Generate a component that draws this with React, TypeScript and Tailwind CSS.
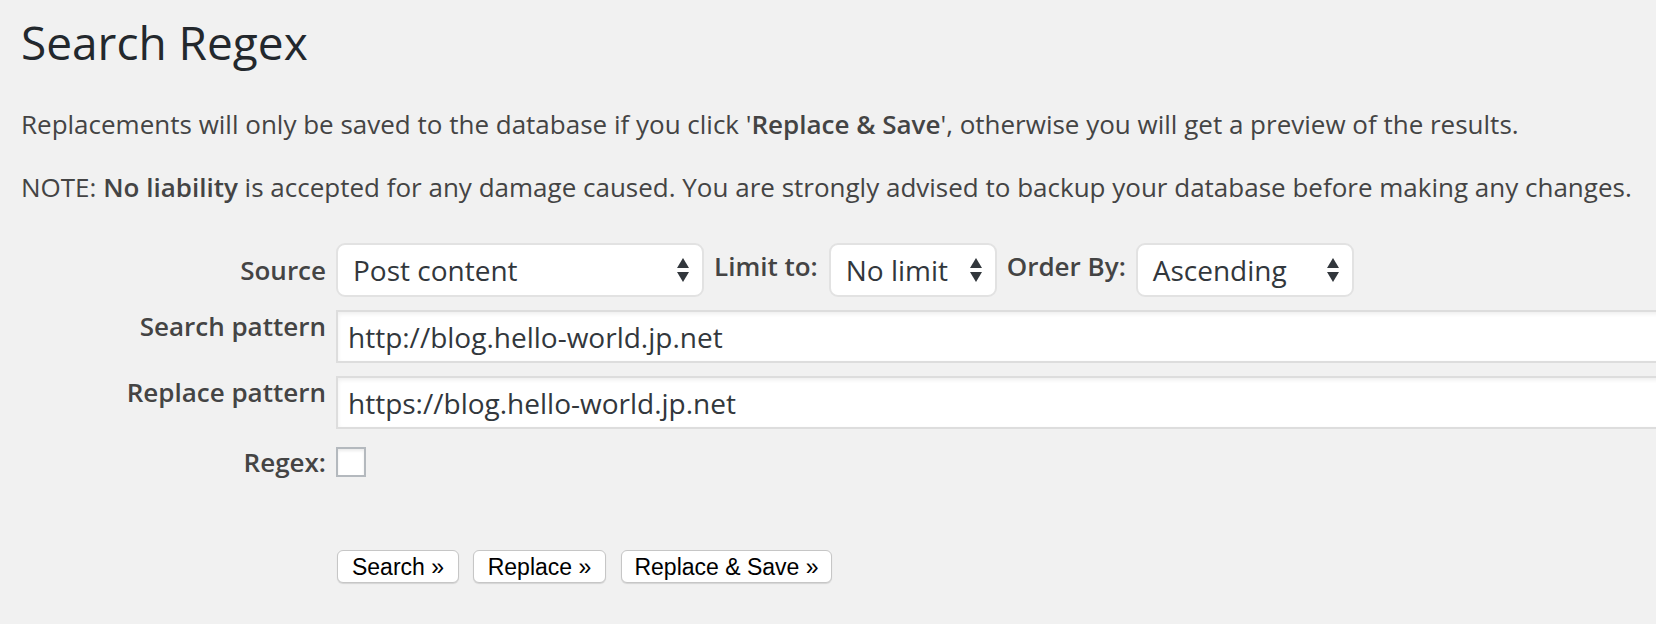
import type { ReactNode } from "react";

function Arrows() {
  return (
    <svg width="14" height="26" viewBox="0 0 14 26" className="shrink-0">
      <path d="M7 1 L13 11 L1 11 Z" fill="#32373c" />
      <path d="M1 15 L13 15 L7 25 Z" fill="#32373c" />
    </svg>
  );
}

function FakeSelect({ value, width }: { value: string; width: string }) {
  return (
    <div
      className={`${width} flex h-[54px] items-center justify-between rounded-[9px] border-2 border-[#e2e2e2] bg-white pl-[15px] pr-[12px] text-[28px] text-[#32373c]`}
    >
      <span>{value}</span>
      <Arrows />
    </div>
  );
}

function Label({ children, className = "" }: { children: ReactNode; className?: string }) {
  return (
    <div className={`text-right text-[26px] font-semibold leading-[26px] text-[#444] ${className}`}>
      {children}
    </div>
  );
}

function TextInput({ value }: { value: string }) {
  return (
    <div className="flex h-[53px] w-[1400px] items-center border-2 border-[#dddddd] bg-white pl-[10px] text-[28px] text-[#32373c] shadow-[inset_0_2px_4px_rgba(0,0,0,0.07)]">
      {value}
    </div>
  );
}

function Button({ children, width }: { children: ReactNode; width: string }) {
  return (
    <button
      type="button"
      className={`${width} h-[33px] rounded-[6px] border border-[#c6c6c6] bg-white pt-[2px] text-center font-['Liberation_Sans',Arial,sans-serif] text-[23px] leading-none text-black shadow-[0_1px_1px_rgba(0,0,0,0.12)]`}
    >
      {children}
    </button>
  );
}

export default function App() {
  return (
    <div className="h-[624px] w-full overflow-hidden bg-[#f1f1f1] pl-[21px] pt-[19px] font-['Open_Sans',sans-serif] text-[#444]">
      <h1 className="text-[46px] font-normal leading-none text-[#23282d]">Search Regex</h1>

      <p className="mt-[40px] text-[26px] leading-[39px]">
        Replacements will only be saved to the database if you click '<strong className="font-semibold">Replace &amp; Save</strong>', otherwise you will get a preview of the results.
      </p>
      <p className="mt-[24px] text-[26px] leading-[39px]">
        NOTE: <strong className="font-semibold">No liability</strong> is accepted for any damage caused. You are strongly advised to backup your database before making any changes.
      </p>

      <div className="mt-[36px] grid grid-cols-[305px_auto] gap-x-[10px]">
        {/* source row */}
        <Label className="self-center">Source</Label>
        <div className="flex items-center">
          <FakeSelect value="Post content" width="w-[368px]" />
          <Label className="ml-[10px] mb-[8px]">Limit to:</Label>
          <FakeSelect value="No limit" width="w-[168px] ml-[11px]" />
          <Label className="ml-[10px] mb-[8px]">Order By:</Label>
          <FakeSelect value="Ascending" width="w-[218px] ml-[10px]" />
        </div>

        <Label className="mt-[13px] pt-[3px]">Search pattern</Label>
        <div className="mt-[13px]">
          <TextInput value="http://blog.hello-world.jp.net" />
        </div>

        <Label className="mt-[13px] pt-[3px]">Replace pattern</Label>
        <div className="mt-[13px]">
          <TextInput value="https://blog.hello-world.jp.net" />
        </div>

        <Label className="mt-[18px] self-center">Regex:</Label>
        <div className="mt-[18px]">
          <div className="h-[30px] w-[30px] border-2 border-[#b4b9be] bg-white shadow-[inset_0_2px_3px_rgba(0,0,0,0.08)]" />
        </div>

        <div />
        <div className="mt-[73px] flex gap-[14px] pl-[1px]">
          <Button width="w-[122px]">Search »</Button>
          <Button width="w-[133px]">Replace »</Button>
          <Button width="w-[211px] ml-[1px]">Replace &amp; Save »</Button>
        </div>
      </div>
    </div>
  );
}
